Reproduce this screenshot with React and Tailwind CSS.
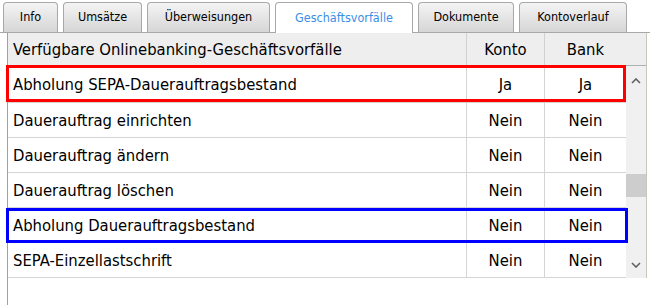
import React from 'react'

const tabs = [
  { label: 'Info', w: 'w-[55px]' },
  { label: 'Umsätze', w: 'w-[79px]' },
  { label: 'Überweisungen', w: 'w-[123px]' },
  { label: 'Geschäftsvorfälle', w: 'w-[138px]', active: true },
  { label: 'Dokumente', w: 'w-[96px]' },
  { label: 'Kontoverlauf', w: 'w-[108px]' },
]

const rows = [
  { name: 'Abholung SEPA-Dauerauftragsbestand', konto: 'Ja', bank: 'Ja', mark: 'red' },
  { name: 'Dauerauftrag einrichten', konto: 'Nein', bank: 'Nein' },
  { name: 'Dauerauftrag ändern', konto: 'Nein', bank: 'Nein' },
  { name: 'Dauerauftrag löschen', konto: 'Nein', bank: 'Nein' },
  { name: 'Abholung Dauerauftragsbestand', konto: 'Nein', bank: 'Nein', mark: 'blue' },
  { name: 'SEPA-Einzellastschrift', konto: 'Nein', bank: 'Nein' },
]

function Tab({ label, w, active }) {
  return (
    <div
      className={`${w} h-[30px] flex items-center justify-center rounded-t-[4px] border border-b-0 text-[12.5px] ${
        active
          ? 'bg-white border-[#a8a8a8] text-[#3a8ee6] h-[31px] -mb-px'
          : 'bg-gradient-to-b from-[#f4f4f4] to-[#d6d6d6] border-[#a8a8a8] text-black'
      }`}
    >
      {label}
    </div>
  )
}

export default function App() {
  return (
    <div
      className="w-[650px] h-[305px] bg-white overflow-hidden text-black"
      style={{ fontFamily: '"DejaVu Sans Condensed", "DejaVu Sans", sans-serif' }}
    >
      {/* Tabs */}
      <div className="h-[33px] flex items-end gap-[5px] pl-[3px] border-b border-[#a8a8a8]">
        {tabs.map((t) => (
          <Tab key={t.label} {...t} />
        ))}
      </div>

      <div className="flex border-l border-[#a0a0a0] ml-[7px] h-[272px]">
        <div className="w-[618px] flex flex-col">
          {/* Header */}
          <div className="h-[33px] flex bg-[#eeeeee] border-b border-[#c8c8c8] text-[16.5px] pt-[2px]">
            <div className="w-[459px] pl-[5px] flex items-center border-r border-[#d0d0d0] -mt-[2px] pt-[2px]">
              Verfügbare Onlinebanking-Geschäftsvorfälle
            </div>
            <div className="w-[78px] flex items-center justify-center border-r border-[#d0d0d0] -mt-[2px] pt-[2px]">Konto</div>
            <div className="flex-1 flex items-center justify-center">Bank</div>
          </div>

          {/* Rows */}
          {rows.map((r, i) => (
            <div
              key={r.name}
              className={`relative flex border-b border-[#d4d4d4] text-[16.5px] ${i === 0 ? 'h-[37px]' : 'h-[35px]'}`}
            >
              <div className="w-[459px] pl-[5px] pt-[3px] flex items-center border-r border-[#d4d4d4]">{r.name}</div>
              <div className="w-[78px] pt-[3px] flex items-center justify-center border-r border-[#d4d4d4]">{r.konto}</div>
              <div className="flex-1 pt-[3px] flex items-center justify-center">{r.bank}</div>
              {r.mark === 'red' && (
                <div className="absolute left-[-2px] right-0 top-[-1px] h-[37px] border-[3px] border-[#ff0000] pointer-events-none" />
              )}
              {r.mark === 'blue' && (
                <div className="absolute left-[-2px] right-[-2px] top-0 h-[35px] border-[3px] border-[#0000ff] pointer-events-none" />
              )}
            </div>
          ))}
        </div>

        {/* Scrollbar */}
        <div className="w-[20px] flex flex-col">
          <div className="h-[33px] bg-[#eeeeee] border-b border-[#b0b0b0]" />
          <div className="h-[212px] bg-[#f0f0f0] flex flex-col items-center">
            <svg width="10" height="6" viewBox="0 0 10 6" className="mt-[12px]">
              <path d="M1 5 L5 1 L9 5" fill="none" stroke="#606060" strokeWidth="1.6" />
            </svg>
            <div className="w-full h-[23px] bg-[#cdcdcd] mt-[90px]" />
            <svg width="10" height="6" viewBox="0 0 10 6" className="mt-auto mb-[10px]">
              <path d="M1 1 L5 5 L9 1" fill="none" stroke="#606060" strokeWidth="1.6" />
            </svg>
          </div>
        </div>
        <div className="w-px h-[245px] bg-[#c8c8b8]" />
      </div>
    </div>
  )
}
